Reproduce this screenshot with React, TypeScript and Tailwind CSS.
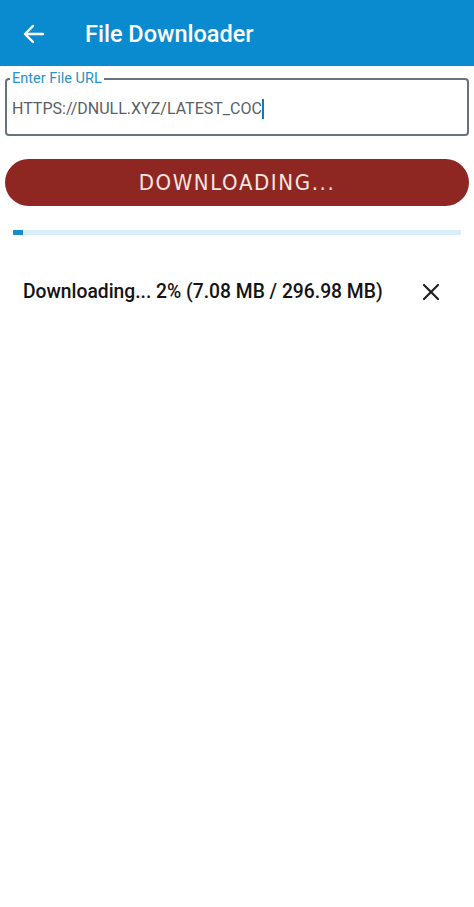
import React from "react";

export default function App() {
  return (
    <div className="w-[474px] h-[907px] bg-white flex flex-col" style={{ fontFamily: "Roboto, 'Noto Sans', sans-serif" }}>
      <div className="h-[66px] bg-[#0a8bd0] flex items-center">
        <svg className="ml-[23px] mt-[1px]" width="22" height="20" viewBox="0 0 22 20" fill="none" stroke="white" strokeWidth="2.4" strokeLinecap="round" strokeLinejoin="round">
          <path d="M20 10H3" />
          <path d="M10 2L2 10L10 18" />
        </svg>
        <span className="ml-[40px] text-white text-[23.5px] font-medium leading-none mt-[3px]">File Downloader</span>
      </div>
      <fieldset className="mx-[5px] mt-[6px] h-[64px] border-2 border-[#68747c] rounded-[4px] px-[4px] min-w-0">
        <legend className="px-[2px] ml-[-1px] text-[14.5px] text-[#2892c8] leading-none">Enter File URL</legend>
        <div className="flex items-center mt-[12px] ml-[1px]">
          <span className="text-[16px] text-[#5a5f63] tracking-[0px] leading-none">HTTPS://DNULL.XYZ/LATEST_COC</span>
          <span className="w-[2px] h-[20px] bg-[#0a7cc0] ml-[0px]" />
        </div>
      </fieldset>
      <div className="mx-[5px] mt-[23px] h-[47px] rounded-full bg-[#8e2722] flex items-center justify-center">
        <span className="text-[#f7e4e0] text-[22px] tracking-[1.6px] leading-none mt-[1px]" style={{ fontFamily: "'DejaVu Sans Condensed', 'Liberation Sans', sans-serif", fontStretch: "condensed" }}>DOWNLOADING...</span>
      </div>
      <div className="mx-[13px] mt-[24px] h-[5px] bg-[#d8eff9] flex">
        <div className="w-[10px] h-full bg-[#1a8bc9]" />
      </div>
      <div className="mt-[47px] flex items-center pl-[23px] pr-[34px] justify-between">
        <span className="text-[19.3px] font-medium text-[#141414] leading-none">Downloading... 2% (7.08 MB / 296.98 MB)</span>
        <svg width="18" height="18" viewBox="0 0 18 18" stroke="#222" strokeWidth="2.2" strokeLinecap="round">
          <path d="M2 2L16 16" />
          <path d="M16 2L2 16" />
        </svg>
      </div>
    </div>
  );
}
